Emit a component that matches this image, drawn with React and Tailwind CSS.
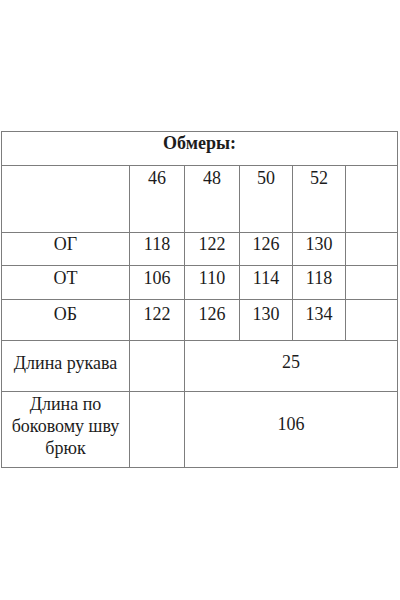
export default function App() {
  const cell = "border border-[#7d7d7d] align-top text-center p-0";
  const font = { fontFamily: '"Liberation Serif", "DejaVu Serif", serif' };
  return (
    <div className="w-[400px] h-[600px] bg-white text-[#1c1c1c] text-[18px] leading-[22px]" style={font}>
      <div className="pt-[131px] pl-[1px]">
        <table className="border-collapse table-fixed w-[396px]">
          <colgroup>
            <col className="w-[128px]" />
            <col className="w-[55px]" />
            <col className="w-[55px]" />
            <col className="w-[53px]" />
            <col className="w-[53px]" />
            <col className="w-[52px]" />
          </colgroup>
          <tbody>
            <tr className="h-[34px]">
              <td colSpan={6} className={`${cell} pt-[0px] font-bold`}>Обмеры:</td>
            </tr>
            <tr className="h-[67px]">
              <td className={cell}></td>
              <td className={`${cell} pt-[1px]`}>46</td>
              <td className={`${cell} pt-[1px]`}>48</td>
              <td className={`${cell} pt-[1px]`}>50</td>
              <td className={`${cell} pt-[1px]`}>52</td>
              <td className={cell}></td>
            </tr>
            <tr className="h-[33px]">
              <td className={`${cell} pt-[0px]`}>ОГ</td>
              <td className={`${cell} pt-[0px]`}>118</td>
              <td className={`${cell} pt-[0px]`}>122</td>
              <td className={`${cell} pt-[0px]`}>126</td>
              <td className={`${cell} pt-[0px]`}>130</td>
              <td className={cell}></td>
            </tr>
            <tr className="h-[34px]">
              <td className={`${cell} pt-[1px]`}>ОТ</td>
              <td className={`${cell} pt-[1px]`}>106</td>
              <td className={`${cell} pt-[1px]`}>110</td>
              <td className={`${cell} pt-[1px]`}>114</td>
              <td className={`${cell} pt-[1px]`}>118</td>
              <td className={cell}></td>
            </tr>
            <tr className="h-[41px]">
              <td className={`${cell} pt-[3px]`}>ОБ</td>
              <td className={`${cell} pt-[3px]`}>122</td>
              <td className={`${cell} pt-[3px]`}>126</td>
              <td className={`${cell} pt-[3px]`}>130</td>
              <td className={`${cell} pt-[3px]`}>134</td>
              <td className={cell}></td>
            </tr>
            <tr className="h-[51px]">
              <td className={`${cell} pt-[11px]`}>Длина рукава</td>
              <td className={cell}></td>
              <td colSpan={4} className={`${cell} pt-[10px]`}>25</td>
            </tr>
            <tr className="h-[76px]">
              <td className={`${cell} pt-[1px] px-0`}>
                Длина по
                <br />
                боковому шву
                <br />
                брюк
              </td>
              <td className={cell}></td>
              <td colSpan={4} className={`${cell} pt-[21px]`}>106</td>
            </tr>
          </tbody>
        </table>
      </div>
    </div>
  );
}
